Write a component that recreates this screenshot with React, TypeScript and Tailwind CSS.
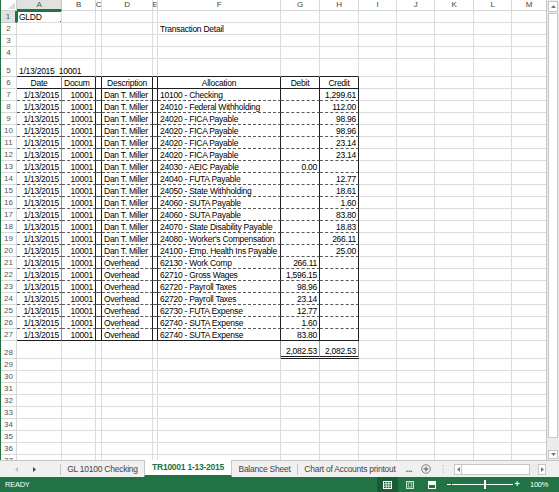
import React from 'react';

type Col = { k: string; w: string };

const COLS: Col[] = [
  { k: 'A', w: 'w-[45px]' },
  { k: 'B', w: 'w-[34px]' },
  { k: 'C', w: 'w-[6px]' },
  { k: 'D', w: 'w-[51px]' },
  { k: 'E', w: 'w-[5px]' },
  { k: 'F', w: 'w-[123px]' },
  { k: 'G', w: 'w-[39px]' },
  { k: 'H', w: 'w-[39px]' },
  { k: 'I', w: 'w-[38px]' },
  { k: 'J', w: 'w-[38px]' },
  { k: 'K', w: 'w-[39px]' },
  { k: 'L', w: 'w-[38px]' },
  { k: 'M', w: 'w-[35px]' },
];

type Entry = { desc: string; alloc: string; debit?: string; credit?: string };

const DAN = 'Dan T. Miller';
const OH = 'Overhead';

// rows 7..27
const DATA: Entry[] = [
  { desc: DAN, alloc: '10100 - Checking', credit: '1,299.61' },
  { desc: DAN, alloc: '24010 - Federal Withholding', credit: '112.00' },
  { desc: DAN, alloc: '24020 - FICA Payable', credit: '98.96' },
  { desc: DAN, alloc: '24020 - FICA Payable', credit: '98.96' },
  { desc: DAN, alloc: '24020 - FICA Payable', credit: '23.14' },
  { desc: DAN, alloc: '24020 - FICA Payable', credit: '23.14' },
  { desc: DAN, alloc: '24030 - AEIC Payable', debit: '0.00' },
  { desc: DAN, alloc: '24040 - FUTA Payable', credit: '12.77' },
  { desc: DAN, alloc: '24050 - State Withholding', credit: '18.61' },
  { desc: DAN, alloc: '24060 - SUTA Payable', credit: '1.60' },
  { desc: DAN, alloc: '24060 - SUTA Payable', credit: '83.80' },
  { desc: DAN, alloc: '24070 - State Disability Payable', credit: '18.83' },
  { desc: DAN, alloc: "24080 - Worker's Compensation", credit: '266.11' },
  { desc: DAN, alloc: '24100 - Emp. Health Ins Payable', credit: '25.00' },
  { desc: OH, alloc: '62130 - Work Comp', debit: '266.11' },
  { desc: OH, alloc: '62710 - Gross Wages', debit: '1,596.15' },
  { desc: OH, alloc: '62720 - Payroll Taxes', debit: '98.96' },
  { desc: OH, alloc: '62720 - Payroll Taxes', debit: '23.14' },
  { desc: OH, alloc: '62730 - FUTA Expense', debit: '12.77' },
  { desc: OH, alloc: '62740 - SUTA Expense', debit: '1.60' },
  { desc: OH, alloc: '62740 - SUTA Expense', debit: '83.80' },
];

const ROWS = Array.from({ length: 37 }, (_, i) => i + 1);

function rowHeight(r: number) {
  return r === 5 || r === 28 ? 'h-[18px]' : 'h-[12px]';
}

function cellBorder(r: number, c: number) {
  let right = 'border-r border-r-[#dadcdd]';
  let bottom = 'border-b border-b-[#dadcdd]';
  const inTable = r >= 6 && r <= 27 && c <= 7;
  if (inTable) {
    right = c === 0 ? 'border-r border-r-[#8c8c8c]' : 'border-r border-r-[#1f1f1f]';
    if (r === 6 || r === 27) bottom = 'border-b border-b-[#1f1f1f]';
    else bottom = 'border-b border-b-[#5a5a5a] [border-bottom-style:dashed]';
  }
  if (r === 5 && c <= 7) bottom = 'border-b border-b-[#1f1f1f]';
  if (r === 28 && (c === 5 || c === 6 || c === 7)) right = 'border-r border-r-[#9a9a9a]';
  if (r === 28 && (c === 6 || c === 7)) bottom = 'border-b-[3px] border-b-[#1f1f1f] [border-bottom-style:double]';
  return `${right} ${bottom}`;
}

type Content = { text: string; align: 'l' | 'r' | 'c'; spill?: boolean };

function cellContent(r: number, c: number): Content | null {
  if (r === 1 && c === 0) return { text: 'GLDD', align: 'l' };
  if (r === 2 && c === 5) return { text: 'Transaction Detail', align: 'l', spill: true };
  if (r === 5 && c === 0) return { text: '1/13/2015  10001', align: 'l', spill: true };
  if (r === 6) {
    if (c === 0) return { text: 'Date', align: 'c' };
    if (c === 1) return { text: 'Docum', align: 'l' };
    if (c === 3) return { text: 'Description', align: 'c' };
    if (c === 5) return { text: 'Allocation', align: 'c' };
    if (c === 6) return { text: 'Debit', align: 'c' };
    if (c === 7) return { text: 'Credit', align: 'c' };
    return null;
  }
  if (r >= 7 && r <= 27) {
    const e = DATA[r - 7];
    if (c === 0) return { text: '1/13/2015', align: 'r' };
    if (c === 1) return { text: '10001', align: 'r' };
    if (c === 3) return { text: e.desc, align: 'l' };
    if (c === 5) return { text: e.alloc, align: 'l' };
    if (c === 6 && e.debit) return { text: e.debit, align: 'r' };
    if (c === 7 && e.credit) return { text: e.credit, align: 'r' };
    return null;
  }
  if (r === 28 && (c === 6 || c === 7)) return { text: '2,082.53', align: 'r' };
  return null;
}

function Cell({ r, c }: { r: number; c: number }) {
  const ct = cellContent(r, c);
  const justify = ct?.align === 'r' ? 'justify-end' : ct?.align === 'c' ? 'justify-center' : 'justify-start';
  const overflow = ct?.spill ? 'overflow-visible' : 'overflow-hidden';
  return (
    <div
      className={`relative shrink-0 flex items-end whitespace-pre px-[2px] pb-[1px] leading-none ${COLS[c].w} ${rowHeight(r)} ${cellBorder(r, c)} ${justify} ${overflow}`}
    >
      {ct?.text}
      {r === 1 && c === 0 && (
        <div className="pointer-events-none absolute left-[-1px] top-[-1px] z-10 w-[47px] h-[14px] border-2 border-[#217346]">
          <div className="absolute right-[-4px] bottom-[-4px] w-[6px] h-[6px] bg-[#217346] border border-white" />
        </div>
      )}
    </div>
  );
}

function ColumnHeader() {
  return (
    <div className="flex h-[11px] shrink-0">
      <div className="w-[16px] shrink-0 border-r border-b border-[#d0d0d0] relative">
        <svg className="absolute right-[1px] bottom-[1px]" width="7" height="7" viewBox="0 0 7 7">
          <polygon points="7,0 7,7 0,7" fill="#dcdcdc" />
        </svg>
      </div>
      {COLS.map((col) =>
        col.k === 'A' ? (
          <div
            key={col.k}
            className={`${col.w} shrink-0 flex items-center justify-center bg-[#e1e1e1] text-[#217346] border-r border-r-[#c8c8c8] border-b-2 border-b-[#217346] text-[8px]`}
          >
            {col.k}
          </div>
        ) : (
          <div
            key={col.k}
            className={`${col.w} shrink-0 flex items-center justify-center text-[#444] border-r border-b border-[#d8d8d8] text-[8px] overflow-hidden`}
          >
            {col.k}
          </div>
        ),
      )}
    </div>
  );
}

function SheetRow({ r }: { r: number }) {
  const sel = r === 1;
  return (
    <div className="flex shrink-0">
      <div
        className={`w-[16px] shrink-0 flex items-end justify-center pb-[1px] text-[8px] leading-none tracking-normal ${rowHeight(r)} ${
          sel
            ? 'bg-[#e1e1e1] text-[#217346] border-b border-b-[#c8c8c8] border-r-2 border-r-[#217346]'
            : 'text-[#555] border-r border-b border-[#d8d8d8]'
        }`}
      >
        {r}
      </div>
      {COLS.map((_, c) => (
        <Cell key={c} r={r} c={c} />
      ))}
    </div>
  );
}

function VScroll() {
  return (
    <div className="w-[13px] h-[460px] shrink-0 flex flex-col bg-[#ececec] border-l border-[#c6c6c6]">
      <div className="h-[11px] mx-[1px] mt-[1px] flex items-center justify-center bg-white border border-[#c6c6c6]">
        <svg width="5" height="3" viewBox="0 0 5 3">
          <polygon points="0,3 5,3 2.5,0" fill="#777" />
        </svg>
      </div>
      <div className="flex-1 mx-[1px] my-[1px] bg-white border border-[#c6c6c6] mb-[12px]" />
      <div className="h-[9px] mx-[1px] mb-[1px] flex items-center justify-center bg-white border border-[#c6c6c6]">
        <svg width="5" height="3" viewBox="0 0 5 3">
          <polygon points="0,0 5,0 2.5,3" fill="#777" />
        </svg>
      </div>
    </div>
  );
}

function TabBar() {
  return (
    <div className="h-[17px] shrink-0 flex items-stretch bg-[#f0f0f0] border-t border-[#c6c6c6] text-[8.5px] text-[#444]">
      <div className="w-[60px] shrink-0 flex items-center">
        <svg className="ml-[15px]" width="3" height="5" viewBox="0 0 3 5">
          <polygon points="3,0 3,5 0,2.5" fill="#c0c0c0" />
        </svg>
        <svg className="ml-[15px]" width="3" height="5" viewBox="0 0 3 5">
          <polygon points="0,0 0,5 3,2.5" fill="#444" />
        </svg>
      </div>
      <div className="w-px h-[11px] self-center bg-[#c6c6c6]" />
      <div className="w-[83px] shrink-0 flex items-center justify-center">GL 10100 Checking</div>
      <div className="w-[88px] shrink-0 -mt-px flex items-center justify-center bg-white text-[#217346] font-bold border-x border-[#c6c6c6] border-b-2 border-b-[#217346]">
        TR10001 1-13-2015
      </div>
      <div className="w-[65px] shrink-0 flex items-center justify-center">Balance Sheet</div>
      <div className="w-px h-[11px] self-center bg-[#c6c6c6]" />
      <div className="w-[104px] shrink-0 flex items-center justify-center">Chart of Accounts printout</div>
      <div className="w-[14px] shrink-0 flex items-center justify-center text-[#217346] font-bold">...</div>
      <div className="w-[20px] shrink-0 flex items-center justify-center">
        <svg width="10" height="10" viewBox="0 0 10 10">
          <circle cx="5" cy="5" r="4.3" fill="none" stroke="#777" strokeWidth="0.9" />
          <path d="M5 2.6V7.4M2.6 5H7.4" stroke="#555" strokeWidth="1" />
        </svg>
      </div>
      <div className="w-[14px] shrink-0 flex items-center justify-center">
        <svg width="2" height="8" viewBox="0 0 2 8">
          <circle cx="1" cy="1" r="0.6" fill="#999" />
          <circle cx="1" cy="4" r="0.6" fill="#999" />
          <circle cx="1" cy="7" r="0.6" fill="#999" />
        </svg>
      </div>
      <div className="ml-[4px] w-[92px] shrink-0 flex items-center">
        <div className="h-[11px] w-[8px] flex items-center justify-center bg-white border border-[#c6c6c6]">
          <svg width="3" height="5" viewBox="0 0 3 5">
            <polygon points="3,0 3,5 0,2.5" fill="#777" />
          </svg>
        </div>
        <div className="h-[11px] w-[68px] bg-white border-y border-r border-[#c6c6c6]" />
        <div className="h-[11px] flex-1 bg-[#ececec]" />
        <div className="h-[11px] w-[8px] flex items-center justify-center bg-white border border-[#c6c6c6]">
          <svg width="3" height="5" viewBox="0 0 3 5">
            <polygon points="0,0 0,5 3,2.5" fill="#777" />
          </svg>
        </div>
      </div>
    </div>
  );
}

function StatusBar() {
  return (
    <div className="h-[15px] shrink-0 flex items-center bg-[#217346] text-white text-[7.5px]">
      <div className="w-[377px] shrink-0 pl-[5px]">READY</div>
      <div className="w-[21px] h-[15px] shrink-0 flex items-center justify-center bg-[#1a5a36]">
        <svg width="9" height="8" viewBox="0 0 9 8">
          <rect x="0.5" y="0.5" width="8" height="7" fill="none" stroke="#fff" strokeWidth="1" />
          <path d="M3.2 0.5V7.5M5.8 0.5V7.5M0.5 2.8H8.5M0.5 5.2H8.5" stroke="#fff" strokeWidth="0.8" />
        </svg>
      </div>
      <div className="ml-[5px] w-[14px] shrink-0 flex items-center justify-center">
        <svg width="8" height="8" viewBox="0 0 8 8">
          <rect x="0.5" y="0.5" width="7" height="7" fill="none" stroke="#cfe3d6" strokeWidth="1" />
          <rect x="2.2" y="2" width="3.6" height="4" fill="none" stroke="#cfe3d6" strokeWidth="0.8" />
        </svg>
      </div>
      <div className="ml-[8px] w-[14px] shrink-0 flex items-center justify-center">
        <svg width="8" height="8" viewBox="0 0 8 8">
          <rect x="0.5" y="0.5" width="7" height="7" fill="none" stroke="#fff" strokeWidth="1" />
          <rect x="1" y="1" width="6" height="3" fill="#fff" />
        </svg>
      </div>
      <div className="ml-[7px] w-[6px] shrink-0 flex items-center justify-center">
        <div className="w-[4px] h-px bg-white" />
      </div>
      <div className="relative w-[61px] h-[15px] shrink-0 flex items-center">
        <div className="w-full h-px bg-white" />
        <div className="absolute left-[32px] top-[3px] w-[2px] h-[9px] bg-white" />
      </div>
      <div className="w-[8px] shrink-0 flex items-center justify-center font-bold text-[9px] leading-none">+</div>
      <div className="ml-[9px]">100%</div>
    </div>
  );
}

export default function App() {
  return (
    <div className="w-[559px] h-[492px] overflow-hidden flex flex-col bg-white text-black font-['Liberation_Sans',Arial,sans-serif] text-[8.5px] tracking-[-0.25px]">
      <div className="flex h-[460px] shrink-0">
        <div className="w-[546px] h-[460px] shrink-0 overflow-hidden flex flex-col border-l border-l-[#217346]">
          <ColumnHeader />
          {ROWS.map((r) => (
            <SheetRow key={r} r={r} />
          ))}
        </div>
        <VScroll />
      </div>
      <TabBar />
      <StatusBar />
    </div>
  );
}
